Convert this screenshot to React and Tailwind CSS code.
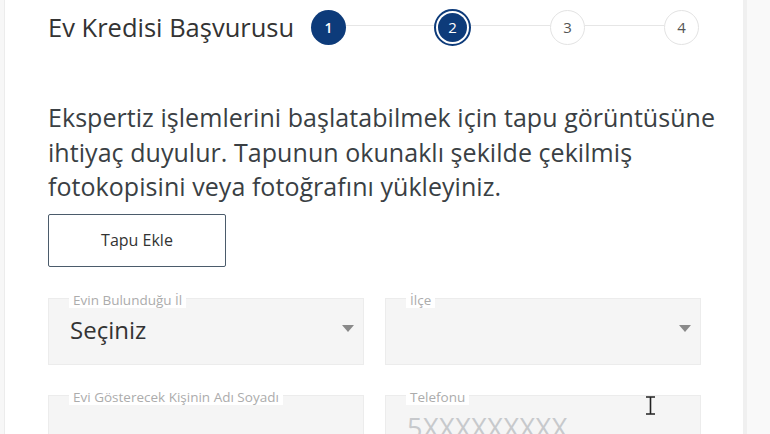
import React from "react";

const font = { fontFamily: "'Open Sans', Lato, sans-serif" };

function Step({ n, state }) {
  if (state === "done") {
    return (
      <div className="w-[35px] h-[35px] rounded-full bg-[#0d3b7a] text-white text-[14px] font-semibold flex items-center justify-center shrink-0">
        {n}
      </div>
    );
  }
  if (state === "active") {
    return (
      <div className="w-[37px] h-[37px] rounded-full border-2 border-[#0d3b7a] p-[2px] shrink-0">
        <div className="w-full h-full rounded-full bg-[#0d3b7a] text-white text-[15px] flex items-center justify-center">
          {n}
        </div>
      </div>
    );
  }
  return (
    <div className="w-[35px] h-[35px] rounded-full border border-[#e3e3e3] bg-white text-[#555] text-[15px] flex items-center justify-center shrink-0">
      {n}
    </div>
  );
}

function Field({ label, children, arrow }) {
  return (
    <div className="relative w-[316px] h-[67px] bg-[#f5f5f5] border border-[#ececec]">
      <span className="absolute left-[20px] top-[-6px] bg-white px-[4px] text-[13.5px] leading-[15px] text-[#acacac]">
        {label}
      </span>
      {children}
      {arrow && (
        <svg className="absolute right-[9px] top-[26px]" width="12" height="7" viewBox="0 0 12 7">
          <path d="M0 0 L12 0 L6 7 Z" fill="#8a8a8a" />
        </svg>
      )}
    </div>
  );
}

export default function App() {
  return (
    <div className="flex w-[770px] h-[434px] overflow-hidden bg-[#f8f8f8]" style={font}>
      {/* LEFT STRIP */}
      <div className="w-[5px] shrink-0 border-r border-[#ececec] bg-[#f7f7f7]" />

      {/* CARD */}
      <div className="w-[738px] shrink-0 bg-white pl-[43px] relative">
        {/* HEADER */}
        <div className="flex items-center h-[54px]">
          <h1 className="w-[263px] shrink-0 text-[25.5px] text-[#333] whitespace-nowrap">Ev Kredisi Başvurusu</h1>
          <div className="flex items-center">
            <Step n="1" state="done" />
            <div className="w-[88px] h-[1px] bg-[#e6e6e6] mb-[4px]" />
            <Step n="2" state="active" />
            <div className="w-[79px] h-[1px] bg-[#e6e6e6] mb-[4px]" />
            <Step n="3" />
            <div className="w-[79px] h-[1px] bg-[#e6e6e6] mb-[4px]" />
            <Step n="4" />
          </div>
        </div>

        {/* TEXT */}
        <p className="mt-[46px] text-[25px] leading-[34.5px] text-[#3a3f44] w-[690px] whitespace-nowrap tracking-[0.05px]">
          Ekspertiz işlemlerini başlatabilmek için tapu görüntüsüne
          <br />
          ihtiyaç duyulur. Tapunun okunaklı şekilde çekilmiş
          <br />
          fotokopisini veya fotoğrafını yükleyiniz.
        </p>

        <button className="mt-[10px] w-[178px] h-[53px] border border-[#4b5b6b] rounded-[2px] text-[16px] text-[#333] bg-white">
          Tapu Ekle
        </button>

        {/* FORM */}
        <div className="mt-[31px] grid grid-cols-[316px_316px] gap-x-[21px] gap-y-[30px]">
          <Field label="Evin Bulunduğu İl" arrow>
            <div className="pt-[13px] pl-[21px] text-[24px] text-[#333]">Seçiniz</div>
          </Field>
          <Field label="İlçe" arrow />
          <Field label="Evi Gösterecek Kişinin Adı Soyadı" />
          <Field label="Telefonu">
            <div className="pt-[12px] pl-[21px] text-[27px] text-[#c7c9cc] tracking-[0.5px]">5XXXXXXXXX</div>
          </Field>
        </div>

        {/* MOUSE CURSOR */}
        <svg className="absolute left-[640px] top-[396px]" width="11" height="19" viewBox="0 0 11 19">
          <path d="M1 1 H10 M5.5 1 V18 M1 18 H10" stroke="#222" strokeWidth="1.6" fill="none" />
        </svg>
      </div>

      {/* RIGHT */}
      <div className="flex-1 border-l-[4px] border-[#f0f0f0] bg-[#f9f9f9]" />
    </div>
  );
}
